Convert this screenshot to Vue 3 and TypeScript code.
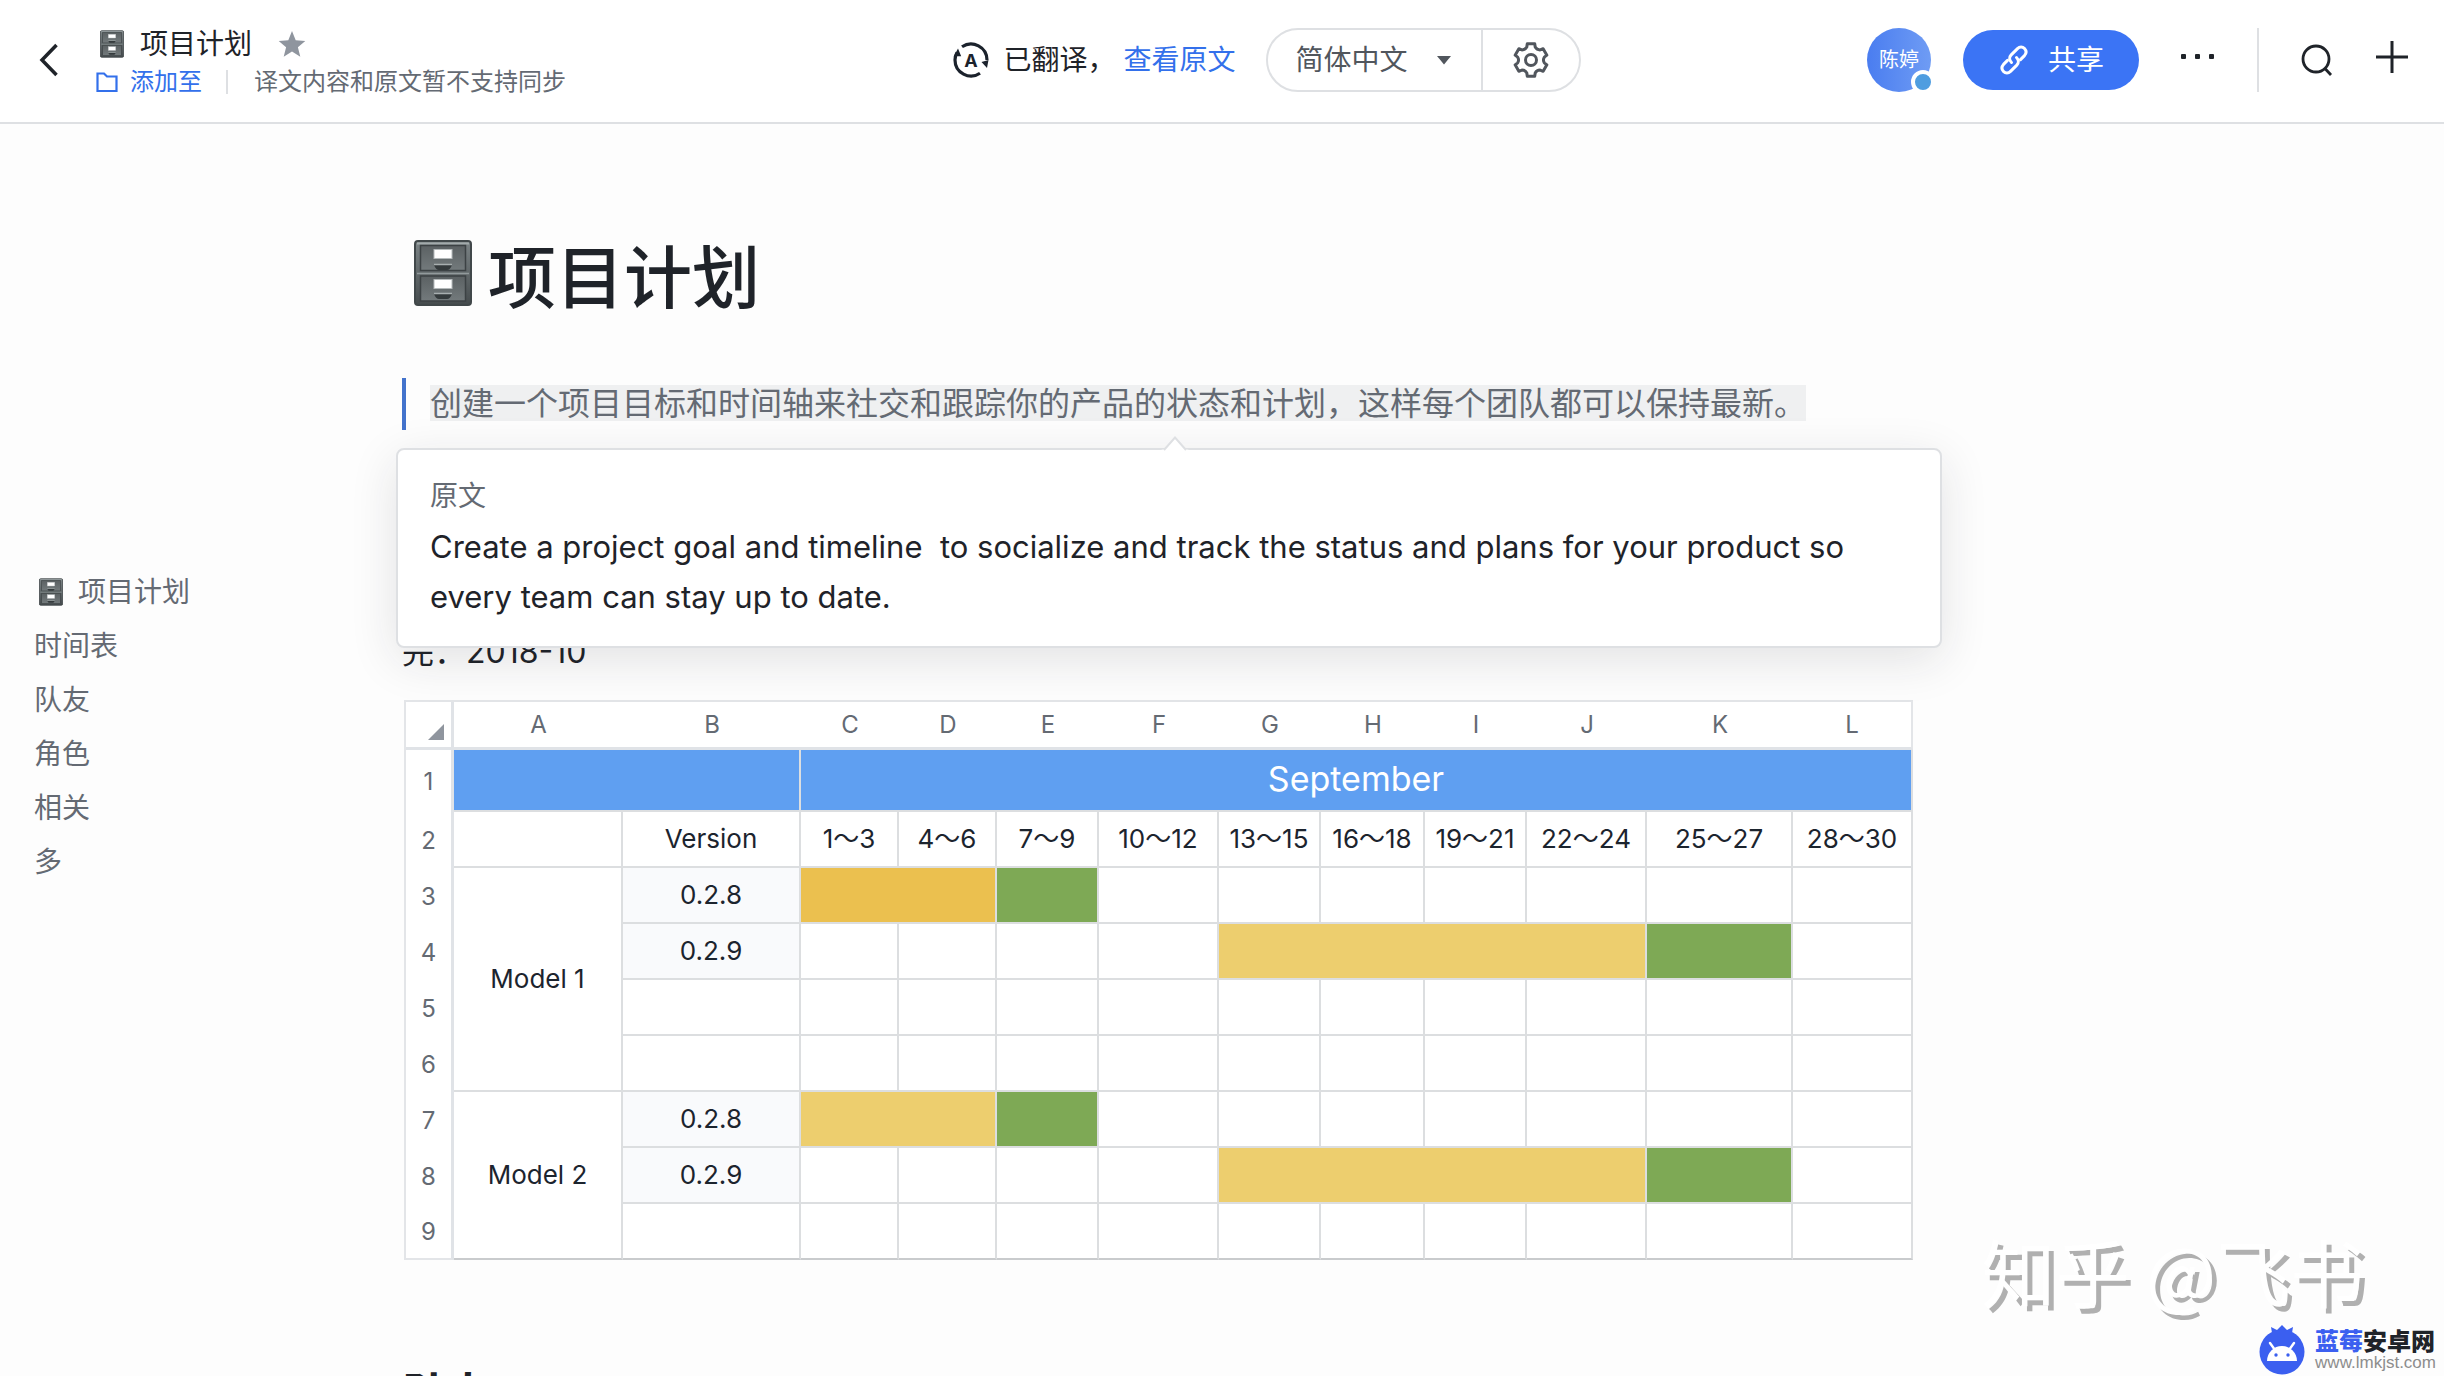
<script setup lang="ts">
import { ref } from 'vue'

interface Cell {
  text?: string
  kind?: string
  cols?: number
  rows?: number
}

interface Column {
  letter: string
  width: number
}

const columns: Column[] = [
  { letter: 'A', width: 169 },
  { letter: 'B', width: 178 },
  { letter: 'C', width: 98 },
  { letter: 'D', width: 98 },
  { letter: 'E', width: 102 },
  { letter: 'F', width: 120 },
  { letter: 'G', width: 102 },
  { letter: 'H', width: 104 },
  { letter: 'I', width: 102 },
  { letter: 'J', width: 120 },
  { letter: 'K', width: 146 },
  { letter: 'L', width: 120 },
]

const blanks = (n: number): Cell[] => Array.from({ length: n }, () => ({}))

const dates = ['1～3', '4～6', '7～9', '10～12', '13～15', '16～18', '19～21', '22～24', '25～27', '28～30']

const rows: Cell[][] = [
  [
    { kind: 'blue', cols: 2 },
    { kind: 'blue', cols: 10, text: 'September' },
  ],
  [{}, { text: 'Version' }, ...dates.map((text) => ({ text }))],
  [
    { text: 'Model 1', rows: 4 },
    { text: '0.2.8', kind: 'version' },
    { kind: 'amber', cols: 2 },
    { kind: 'green' },
    ...blanks(7),
  ],
  [{ text: '0.2.9', kind: 'version' }, ...blanks(4), { kind: 'yellow', cols: 4 }, { kind: 'green' }, {}],
  blanks(11),
  blanks(11),
  [
    { text: 'Model 2', rows: 3 },
    { text: '0.2.8', kind: 'version' },
    { kind: 'yellow', cols: 2 },
    { kind: 'green' },
    ...blanks(7),
  ],
  [{ text: '0.2.9', kind: 'version' }, ...blanks(4), { kind: 'yellow', cols: 4 }, { kind: 'green' }, {}],
  blanks(11),
]

const outline = ['时间表', '队友', '角色', '相关', '多']
const language = ref('zh')

// Six-toothed gear outline around (18, 18)
function gearPath(): string {
  const point = (radius: number, degrees: number): string => {
    const a = (degrees * Math.PI) / 180
    return `${(18 + radius * Math.sin(a)).toFixed(2)} ${(18 - radius * Math.cos(a)).toFixed(2)}`
  }
  let d = ''
  for (let tooth = 0; tooth < 6; tooth++) {
    const a = tooth * 60
    d += `${tooth === 0 ? 'M' : 'L'}${point(16.6, a - 13)}L${point(16.6, a + 13)}`
    d += `L${point(13.6, a + 18)}Q${point(11.6, a + 30)} ${point(13.6, a + 42)}`
  }
  return d + 'Z'
}
const gear = gearPath()
</script>

<template>
  <div class="page">
    <svg class="defs" aria-hidden="true">
      <defs>
        <linearGradient id="cabinet-body" x1="0" y1="0" x2="0" y2="1">
          <stop offset="0" stop-color="#7c8486" />
          <stop offset="1" stop-color="#454b4d" />
        </linearGradient>
        <linearGradient id="cabinet-drawer" x1="0" y1="0" x2="0" y2="1">
          <stop offset="0" stop-color="#5b6163" />
          <stop offset="1" stop-color="#737a7c" />
        </linearGradient>
        <symbol id="cabinet" viewBox="0 0 58 66">
          <rect x="1" y="1" width="56" height="64" rx="3" fill="url(#cabinet-body)" stroke="#41484a" stroke-width="2" />
          <path d="M3 3.500H55" stroke="#a3abac" stroke-width="2" />
          <g stroke="#3c4244" stroke-width="1.500" fill="url(#cabinet-drawer)">
            <rect x="6.500" y="5.500" width="45" height="25" />
            <rect x="6.500" y="36" width="45" height="25" />
          </g>
          <path d="M3 33.500H55" stroke="#929a9c" stroke-width="1.500" />
          <g fill="#fff" stroke="#b5babb">
            <rect x="20" y="9.500" width="18" height="9" />
            <rect x="20" y="39.500" width="18" height="9" />
          </g>
          <path d="M20 25h18c-1 3-3 5-5 5h-8c-2 0-4-2-5-5zM20 54h18c-1 3-3 5-5 5h-8c-2 0-4-2-5-5z" fill="#343a3c" />
          <path d="M20 24.500h18M20 53.500h18" stroke="#a8afb0" stroke-width="1.500" />
        </symbol>
      </defs>
    </svg>

    <header class="topbar">
      <div class="side left">
        <button class="icon-button back" aria-label="返回">
          <svg width="20" height="34" viewBox="0 0 20 34"><path d="M17.500 2L3 17l14.500 15" fill="none" stroke="#1f2329" stroke-width="3.500" /></svg>
        </button>
        <div class="doc-info">
          <div class="doc-title">
            <svg class="cabinet-small" width="24" height="28"><use href="#cabinet" /></svg>
            <span>项目计划</span>
            <button class="icon-button star" aria-label="收藏">
              <svg width="28" height="28" viewBox="0 0 28 28"><path d="M14 1l3.700 9.200 9.600.7-7.400 6.300 2.400 9.600L14 21.600l-8.300 5.200 2.400-9.600L.7 10.900l9.600-.7z" fill="#8f959e" /></svg>
            </button>
          </div>
          <div class="doc-meta">
            <a class="add-to" href="#add">
              <svg width="22" height="22" viewBox="0 0 22 22"><path d="M1.500 20V2.500H8l3 3h9.500V20z" fill="none" stroke="#3370eb" stroke-width="2.200" /></svg>
              <span>添加至</span>
            </a>
            <i class="rule short"></i>
            <span class="note">译文内容和原文暂不支持同步</span>
          </div>
        </div>
      </div>

      <div class="translate">
        <svg width="36" height="36" viewBox="0 0 36 36">
          <g fill="none" stroke="#1b222c" stroke-width="3.200">
            <path d="M9 4.800A16 16 0 0 1 34 18" />
            <path d="M27 31.200A16 16 0 0 1 2 18c0-3 .8-5.500 2-7.500" />
          </g>
          <path d="M5 6.500l3.200 7.800H.8zM35.500 18l-1.500 8-5.500-6z" fill="#1b222c" />
          <text x="18" y="24.500" text-anchor="middle" font-size="18" font-weight="700" fill="#1b222c">A</text>
        </svg>
        <span class="translated">已翻译，</span>
        <a class="original" href="#original">查看原文</a>
        <div class="language">
          <label class="language-pick">
            <select v-model="language" aria-label="翻译语言">
              <option value="zh">简体中文</option>
            </select>
            <svg width="14" height="10" viewBox="0 0 14 10"><path d="M0 1h14L7 9.500z" fill="#51565d" /></svg>
          </label>
          <button class="icon-button gear" aria-label="翻译设置">
            <svg width="36" height="36" viewBox="0 0 36 36" fill="none" stroke="#51565d" stroke-width="3" stroke-linejoin="round">
              <path :d="gear" />
              <circle cx="18" cy="18" r="5.500" />
            </svg>
          </button>
        </div>
      </div>

      <div class="side right">
        <div class="avatar"><span>陈婷</span><i class="status"></i></div>
        <button class="share">
          <svg width="32" height="32" viewBox="0 0 32 32" fill="none" stroke="#fff" stroke-width="3" stroke-linecap="round">
            <path d="M13.500 18.500c-2.400-2.400-2.400-5.400-.3-7.600l6.300-6.300c2.200-2.200 5-2.200 7 0s2 4.800 0 7l-4 4" />
            <path d="M18.500 13.500c2.400 2.400 2.400 5.400.3 7.600l-6.300 6.300c-2.200 2.200-5 2.200-7 0s-2-4.800 0-7l4-4" />
          </svg>
          <span>共享</span>
        </button>
        <button class="icon-button more" aria-label="更多">
          <svg width="34" height="6" viewBox="0 0 34 6" fill="#1f2329"><rect width="5" height="5" rx="1" /><rect x="14" width="5" height="5" rx="1" /><rect x="28" width="5" height="5" rx="1" /></svg>
        </button>
        <i class="rule tall"></i>
        <button class="icon-button search" aria-label="搜索">
          <svg width="32" height="32" viewBox="0 0 32 32" fill="none" stroke="#1f2329" stroke-width="2.800"><circle cx="15" cy="15" r="13" /><path d="M23.500 24l6.500 7" /></svg>
        </button>
        <button class="icon-button plus" aria-label="新建">
          <svg width="32" height="32" viewBox="0 0 32 32"><path d="M16 0v32M0 16h32" stroke="#1f2329" stroke-width="3" /></svg>
        </button>
      </div>
    </header>

    <div class="body">
      <nav class="outline" aria-label="目录">
        <a href="#title"><svg class="cabinet-small" width="24" height="28"><use href="#cabinet" /></svg><span>项目计划</span></a>
        <a v-for="item in outline" :key="item" href="#section">{{ item }}</a>
      </nav>

      <main class="doc">
        <h1 id="title"><svg width="58" height="66"><use href="#cabinet" /></svg><span>项目计划</span></h1>

        <div class="quote">
          <blockquote><mark>创建一个项目目标和时间轴来社交和跟踪你的产品的状态和计划，这样每个团队都可以保持最新。</mark></blockquote>
          <aside class="popup">
            <svg class="tip" width="28" height="16" viewBox="0 0 28 16"><path d="M0 16V14L4 13 14 1.500 24 13l4 1v2z" fill="#fff" /><path d="M3 14L14 1.500 25 14" fill="none" stroke="#dee0e3" stroke-width="2" /></svg>
            <h2>原文</h2>
            <p>Create a project goal and timeline &nbsp;to socialize and track the status and plans for your product so every team can stay up to date.</p>
          </aside>
        </div>

        <p class="finish">完：2018-10</p>

        <table class="sheet">
          <colgroup>
            <col class="gutter" />
            <col v-for="column in columns" :key="column.letter" :style="{ width: column.width + 'px' }" />
          </colgroup>
          <thead>
            <tr>
              <th class="corner" aria-label="全选"><svg width="16" height="16" viewBox="0 0 16 16"><path d="M16 0v16H0z" fill="#8f959e" /></svg></th>
              <th v-for="column in columns" :key="column.letter" scope="col">{{ column.letter }}</th>
            </tr>
          </thead>
          <tbody>
            <tr v-for="(cells, r) in rows" :key="r">
              <th scope="row">{{ r + 1 }}</th>
              <td v-for="(cell, c) in cells" :key="c" :class="cell.kind" :colspan="cell.cols ?? 1" :rowspan="cell.rows ?? 1">{{ cell.text }}</td>
            </tr>
          </tbody>
        </table>

        <h2 class="next">队友</h2>
      </main>
    </div>

    <div class="zhihu">知乎 @飞书</div>
    <div class="site">
      <svg width="46" height="50" viewBox="0 0 46 50">
        <path d="M8 10l5-2-1-6 6 3 5-5 5 5 6-3-1 6 5 2z" fill="#3b5ff0" />
        <circle cx="23" cy="27" r="22.500" fill="#3b5ff0" />
        <path d="M8 36a15 15 0 0 1 30 0z" fill="#fff" />
        <path d="M11 18l5 7M35 18l-5 7" stroke="#fff" stroke-width="2.400" stroke-linecap="round" />
        <circle cx="17" cy="30" r="1.700" fill="#3b5ff0" /><circle cx="29" cy="30" r="1.700" fill="#3b5ff0" />
      </svg>
      <div class="site-text">
        <strong><span>蓝莓</span>安卓网</strong>
        <small>www.lmkjst.com</small>
      </div>
    </div>
  </div>
</template>

<style>
body {
  margin: 0;
}
</style>

<style scoped>
.page {
  position: relative;
  height: 100vh;
  overflow: hidden;
  display: flex;
  flex-direction: column;
  background: #fdfdfd;
  color: #1f2329;
  font-family: Inter, 'Noto Sans CJK SC', sans-serif;
  font-size: 28px;
  line-height: 40px;
}
.page * {
  box-sizing: border-box;
}
.defs {
  position: absolute;
  width: 0;
  height: 0;
}
svg {
  display: block;
  flex: none;
}
button,
select {
  font: inherit;
  color: inherit;
  border: 0;
  background: none;
  padding: 0;
  margin: 0;
}
a {
  color: inherit;
  text-decoration: none;
}
h1,
h2,
p,
blockquote {
  margin: 0;
}

.topbar {
  flex: none;
  display: flex;
  align-items: center;
  height: 124px;
  padding: 0 36px 2px;
  background: #fff;
  border-bottom: 2px solid #dee0e3;
}
.side {
  flex: 1 1 0;
  display: flex;
  align-items: center;
}
.left {
  flex-basis: 90px;
  padding-left: 3px;
}
.right {
  justify-content: flex-end;
}
.doc-info {
  margin-left: 37px;
  padding-top: 4px;
}
.doc-title,
.doc-meta,
.add-to {
  display: flex;
  align-items: center;
}
.doc-title span {
  margin: 0 26px 0 16px;
}
.doc-title .cabinet-small {
  margin-left: 4px;
}
.doc-meta {
  height: 36px;
  font-size: 24px;
  line-height: 36px;
}
.add-to {
  gap: 12px;
  color: #3370eb;
}
.rule {
  width: 2px;
  background: #dee0e3;
}
.short {
  height: 24px;
  margin: 0 26px 0 24px;
}
.tall {
  height: 64px;
  margin: 0 42px;
}
.note {
  color: #646a73;
}
.translate {
  display: flex;
  align-items: center;
}
.translated {
  margin: 0 8px 0 14px;
}
.original {
  color: #3370eb;
  margin-right: 30px;
}
.language {
  display: flex;
  height: 64px;
  border: 2px solid #dee0e3;
  border-radius: 32px;
  color: #51565d;
}
.language-pick {
  display: flex;
  align-items: center;
  padding: 0 30px 0 28px;
  border-right: 2px solid #dee0e3;
}
.language-pick select {
  appearance: none;
  margin-right: 28px;
}
.gear {
  width: 96px;
  display: flex;
  align-items: center;
  justify-content: center;
}
.avatar {
  position: relative;
  width: 64px;
  height: 64px;
  border-radius: 50%;
  display: flex;
  align-items: center;
  justify-content: center;
  background: linear-gradient(90deg, #4a7df0, #6f9cf4);
  color: #fff;
  font-size: 20px;
}
.status {
  position: absolute;
  right: -4px;
  bottom: -2px;
  width: 24px;
  height: 24px;
  border: 4px solid #fff;
  border-radius: 50%;
  background: #4f9de0;
}
.share {
  display: flex;
  align-items: center;
  justify-content: center;
  gap: 18px;
  width: 176px;
  height: 60px;
  margin: 0 42px 0 32px;
  border-radius: 30px;
  background: #3b74f5;
  color: #fff;
}
.search {
  margin-right: 43px;
}
.more,
.plus {
  padding-bottom: 6px;
}

.body {
  display: flex;
  align-items: flex-start;
}
.outline {
  flex: none;
  width: 402px;
  padding: 448px 0 0 34px;
  display: flex;
  flex-direction: column;
  gap: 14px;
  color: #646a73;
}
.outline a {
  display: flex;
  align-items: center;
  gap: 15px;
}
.outline .cabinet-small {
  margin-left: 5px;
}
.doc {
  flex: 0 1 1538px;
  padding-top: 104px;
}
h1 {
  display: flex;
  align-items: center;
  gap: 16px;
  height: 96px;
  padding-left: 12px;
  font-size: 68px;
  line-height: 96px;
  font-weight: 500;
}
h1 svg {
  margin-bottom: 6px;
}
h1 span {
  padding-top: 4px;
}
.quote {
  position: relative;
  margin-top: 54px;
}
blockquote {
  border-left: 4px solid #4373cc;
  padding: 0 24px;
  font-size: 32px;
  line-height: 52px;
}
mark {
  background: #eff0f1;
  color: #646a73;
  display: inline-block;
  padding-top: 2px;
  line-height: 34px;
}
.popup {
  position: absolute;
  top: 70px;
  left: -6px;
  right: -2px;
  z-index: 2;
  padding: 24px 32px;
  border: 2px solid #dee0e3;
  border-radius: 8px;
  background: #fff;
  box-shadow: 0 12px 48px rgba(31, 35, 41, 0.12);
}
.popup h2 {
  padding-top: 2px;
  font-size: 28px;
  line-height: 40px;
  font-weight: 400;
  color: #646a73;
}
.popup p {
  padding-top: 6px;
  font-size: 31px;
  line-height: 50px;
}
.tip {
  position: absolute;
  top: -14px;
  left: calc(50% - 8px);
}
.finish {
  margin-top: 198px;
  font-size: 32px;
  line-height: 48px;
}

.sheet {
  margin: 24px 0 0 2px;
  table-layout: fixed;
  width: 1509px;
  border-collapse: separate;
  border-spacing: 0;
  border: 2px solid #e3e5e8;
  border-right: 0;
  border-bottom: 0;
  background: #fff;
}
.gutter {
  width: 48px;
}
.sheet th,
.sheet td {
  padding: 0;
  height: 56px;
  line-height: 32px;
  text-align: center;
  vertical-align: middle;
}
.sheet th {
  font-size: 24px;
  font-weight: 400;
  color: #646a73;
}
.sheet tbody th {
  padding-top: 2px;
}
.sheet thead th {
  height: 48px;
  border-bottom: 3px solid #e0e3e7;
}
.sheet thead th:last-child {
  border-right: 2px solid #e3e5e8;
}
.sheet .corner,
.sheet tbody th {
  border-right: 3px solid #e0e3e7;
}
.corner svg {
  margin: 14px 0 0 22px;
}
.sheet td {
  font-size: 26px;
  color: #1c242e;
  border-right: 2px solid #dcdee0;
  border-bottom: 2px solid #dcdee0;
  white-space: nowrap;
}
.sheet tbody tr:first-child > * {
  height: 62px;
}
.sheet tbody tr:last-child td,
.sheet tbody td[rowspan='3'] {
  border-bottom-color: #c9cbcd;
}
.sheet tbody tr:last-child th {
  border-bottom: 2px solid #e3e5e8;
}
.sheet .blue {
  background: #5f9ff1;
  background-clip: padding-box;
  color: #fff;
  font-size: 34px;
  padding-bottom: 2px;
}
.sheet .version {
  background: #f9fafc;
}
.sheet .amber {
  background: #ebc04f;
  background-clip: padding-box;
}
.sheet .yellow {
  background: #edce6e;
  background-clip: padding-box;
}
.sheet .green {
  background: #7ea955;
  background-clip: padding-box;
}
.next {
  margin-top: 100px;
  font-size: 48px;
  line-height: 72px;
  font-weight: 700;
}

.zhihu {
  position: absolute;
  right: 80px;
  bottom: 56px;
  font-size: 74px;
  line-height: 100px;
  color: #fff;
  text-shadow: 5px 5px 0 #b0b0b0;
  font-family: 'Noto Sans CJK SC', sans-serif;
}
.site {
  position: absolute;
  right: 8px;
  bottom: 1px;
  display: flex;
  align-items: center;
  gap: 10px;
}
.site-text {
  display: flex;
  flex-direction: column;
}
.site strong {
  font-size: 24px;
  line-height: 26px;
  font-weight: 900;
}
.site strong span {
  color: #3b5ff0;
}
.site small {
  font-family: 'Liberation Sans', sans-serif;
  font-size: 17px;
  line-height: 16px;
  color: #8d8d8d;
}
</style>
